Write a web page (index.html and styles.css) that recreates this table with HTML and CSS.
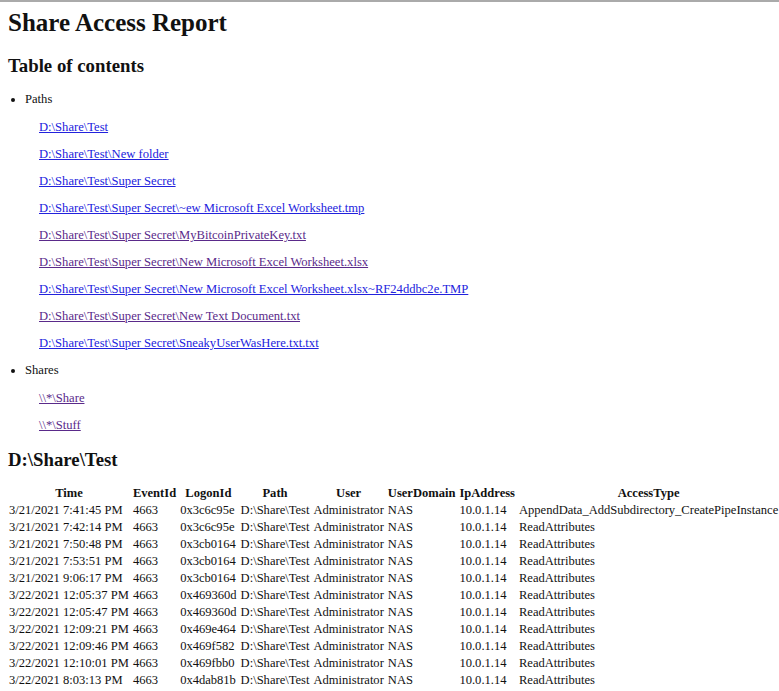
FILE: index.html
```html
<!DOCTYPE html>
<html>
<head>
<meta charset="utf-8">
<title>Share Access Report</title>
<link rel="stylesheet" href="styles.css">
</head>
<body>
<h1 class="title">Share Access Report</h1>
<h2 class="heading toc-heading">Table of contents</h2>
<ul class="toc">
  <li>Paths
    <div class="links">
      <p><a href="#p1">D:\Share\Test</a></p>
      <p><a href="#p2">D:\Share\Test\New folder</a></p>
      <p><a href="#p3">D:\Share\Test\Super Secret</a></p>
      <p><a href="#p4">D:\Share\Test\Super Secret\~ew Microsoft Excel Worksheet.tmp</a></p>
      <p><a class="visited" href="#p5">D:\Share\Test\Super Secret\MyBitcoinPrivateKey.txt</a></p>
      <p><a class="visited" href="#p6">D:\Share\Test\Super Secret\New Microsoft Excel Worksheet.xlsx</a></p>
      <p><a href="#p7">D:\Share\Test\Super Secret\New Microsoft Excel Worksheet.xlsx~RF24ddbc2e.TMP</a></p>
      <p><a class="visited" href="#p8">D:\Share\Test\Super Secret\New Text Document.txt</a></p>
      <p><a href="#p9">D:\Share\Test\Super Secret\SneakyUserWasHere.txt.txt</a></p>
    </div>
  </li>
  <li>Shares
    <div class="links">
      <p><a class="visited" href="#s1">\\*\Share</a></p>
      <p><a class="visited" href="#s2">\\*\Stuff</a></p>
    </div>
  </li>
</ul>
<h2 class="heading section-heading" id="p1">D:\Share\Test</h2>
<table class="events">
  <thead>
    <tr><th>Time</th><th>EventId</th><th>LogonId</th><th>Path</th><th>User</th><th>UserDomain</th><th>IpAddress</th><th>AccessType</th></tr>
  </thead>
  <tbody>
    <tr><td>3/21/2021 7:41:45 PM</td><td>4663</td><td>0x3c6c95e</td><td>D:\Share\Test</td><td>Administrator</td><td>NAS</td><td>10.0.1.14</td><td>AppendData_AddSubdirectory_CreatePipeInstance</td></tr>
    <tr><td>3/21/2021 7:42:14 PM</td><td>4663</td><td>0x3c6c95e</td><td>D:\Share\Test</td><td>Administrator</td><td>NAS</td><td>10.0.1.14</td><td>ReadAttributes</td></tr>
    <tr><td>3/21/2021 7:50:48 PM</td><td>4663</td><td>0x3cb0164</td><td>D:\Share\Test</td><td>Administrator</td><td>NAS</td><td>10.0.1.14</td><td>ReadAttributes</td></tr>
    <tr><td>3/21/2021 7:53:51 PM</td><td>4663</td><td>0x3cb0164</td><td>D:\Share\Test</td><td>Administrator</td><td>NAS</td><td>10.0.1.14</td><td>ReadAttributes</td></tr>
    <tr><td>3/21/2021 9:06:17 PM</td><td>4663</td><td>0x3cb0164</td><td>D:\Share\Test</td><td>Administrator</td><td>NAS</td><td>10.0.1.14</td><td>ReadAttributes</td></tr>
    <tr><td>3/22/2021 12:05:37 PM</td><td>4663</td><td>0x469360d</td><td>D:\Share\Test</td><td>Administrator</td><td>NAS</td><td>10.0.1.14</td><td>ReadAttributes</td></tr>
    <tr><td>3/22/2021 12:05:47 PM</td><td>4663</td><td>0x469360d</td><td>D:\Share\Test</td><td>Administrator</td><td>NAS</td><td>10.0.1.14</td><td>ReadAttributes</td></tr>
    <tr><td>3/22/2021 12:09:21 PM</td><td>4663</td><td>0x469e464</td><td>D:\Share\Test</td><td>Administrator</td><td>NAS</td><td>10.0.1.14</td><td>ReadAttributes</td></tr>
    <tr><td>3/22/2021 12:09:46 PM</td><td>4663</td><td>0x469f582</td><td>D:\Share\Test</td><td>Administrator</td><td>NAS</td><td>10.0.1.14</td><td>ReadAttributes</td></tr>
    <tr><td>3/22/2021 12:10:01 PM</td><td>4663</td><td>0x469fbb0</td><td>D:\Share\Test</td><td>Administrator</td><td>NAS</td><td>10.0.1.14</td><td>ReadAttributes</td></tr>
    <tr><td>3/22/2021 8:03:13 PM</td><td>4663</td><td>0x4dab81b</td><td>D:\Share\Test</td><td>Administrator</td><td>NAS</td><td>10.0.1.14</td><td>ReadAttributes</td></tr>
  </tbody>
</table>
</body>
</html>
```

FILE: styles.css
```css
html, body {
  background: #ffffff;
}
body {
  margin: 0;
  padding: 0 8px;
  border-top: 2px solid #aaaaaa;
  font-family: "Liberation Serif", "Times New Roman", serif;
  font-size: 12.6px;
  color: #111111;
}
.title {
  font-size: 25px;
  line-height: 29px;
  margin: 6px 0 0;
  font-weight: bold;
}
.heading {
  font-size: 18.8px;
  line-height: 22px;
  font-weight: bold;
}
.toc-heading {
  margin: 18px 0 0;
}
.toc {
  margin: 15px 0 0;
  padding-left: 17px;
}
.toc li {
  line-height: 15px;
}
.links {
  padding-left: 14px;
}
.links p {
  margin: 12px 0;
}
.links p:first-child {
  margin-top: 13px;
}
.links a {
  color: #2222dd;
}
.links a.visited {
  color: #5a2a8a;
}
.section-heading {
  margin: 16px 0 0;
}
.events {
  margin-top: 13px;
  border-spacing: 2px;
  margin-left: -2px;
  font-size: 12.55px;
}
.events th, .events td {
  padding: 1px;
  line-height: 13px;
  white-space: nowrap;
}
.events th {
  text-align: center;
}
.events td {
  text-align: left;
}
```
